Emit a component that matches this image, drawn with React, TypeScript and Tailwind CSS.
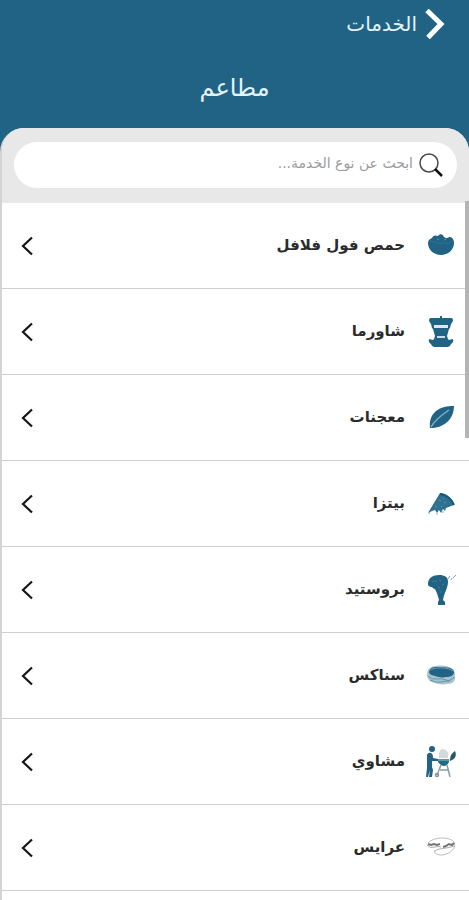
import type { ReactNode } from "react";

type Service = { name: string; icon: ReactNode };

const services: Service[] = [
  {
    name: "حمص فول فلافل",
    icon: (
      <g fill="#206384">
        <path d="M3 13c0-3 2-4 4-5 1-3 4-3 6-2 2-3 5-2 6 1 2 1 3 2 5 0 3 0 5 2 5 6 0 7-6 12-13 12S3 20 3 13z" />
        <path d="M5 11c3 2 6 0 8 2 3 2 5-1 8 0s4-1 6-2" fill="none" stroke="#33718f" strokeWidth="1" />
        <path d="M12 9l2 1M19 10l2-1" stroke="#5d92aa" strokeWidth="1" />
      </g>
    ),
  },
  {
    name: "شاورما",
    icon: (
      <g fill="#206384">
        <path d="M15 0h2v3h-2z" />
        <path d="M6 2h20q2 0 2 2t-2 4l-1 4-1 1-2 7 1 3 1 1 4-1q1 3-2 5-1 3-4 3H10q-3 0-4-3-3-2-2-5l4 1 1-1 1-3-2-7-1-1-1-4Q4 6 4 4t2-2z" />
        <path d="M9 9h14v3H9z" fill="#dceaf0" />
        <path d="M12 20h8v2h-8z" fill="#c5dbe5" />
      </g>
    ),
  },
  {
    name: "معجنات",
    icon: (
      <g>
        <path d="M5 26C4 20 6 13 11 9c5-4 11-5 18-5 0 7-3 13-8 17-4 3-9 5-16 5z" fill="#206384" />
        <path d="M6 25C10 18 15 14 24 8" fill="none" stroke="#86afc2" strokeWidth="1.5" />
      </g>
    ),
  },
  {
    name: "بيتزا",
    icon: (
      <g>
        <path d="M15 5c7 0 13 6 14 12l-8 3-1 3-2-2-2 4-2-3-2 3-2-3-3 1-4 2c4-7 8-13 12-20z" fill="#2e7190" />
        <path d="M15 6c7 1 12 6 14 11" fill="none" stroke="#1b5877" strokeWidth="2" />
        <path d="M14 12l2 1M19 15l2-1M10 18l2 1M16 19l1-1M18 10l1 1" stroke="#6398b0" strokeWidth="1" />
        <path d="M4 24l1 2M12 25v2M18 23v2" stroke="#8bb0c2" strokeWidth="1" />
      </g>
    ),
  },
  {
    name: "بروستيد",
    icon: (
      <g>
        <path d="M3 10C3 4 8 1 14 1c6 0 9 2 9 7 0 6-4 11-5 18l2 2v3h-7v-3l1-2c-1-4-2-7-4-11-2 0-2-2-4-2-2-1-3-1-3-3z" fill="#206384" />
        <path d="M7 8q3-3 5 0M14 6l2 1M13 13l2 1M17 11l2-1M15 18h2" fill="none" stroke="#3f7f99" strokeWidth="1" />
        <path d="M23 5l2-3M26 6l1-2M28 4l3-3" stroke="#8ba5b0" strokeWidth="1" />
      </g>
    ),
  },
  {
    name: "سناكس",
    icon: (
      <g>
        <path d="M2 15c0-6 4-9 9-9 6-1 12 0 15 2 3 1 4 4 4 7 1 6-2 9-8 9-5 1-9 0-12-1-5-1-8-4-8-8z" fill="#a6c3cf" />
        <path d="M4 12c1-4 4-5 8-5 5 0 9 0 13 1 3 1 4 3 4 5-1 3-4 4-8 4-4 1-8 0-11-1-4-1-6-2-6-4z" fill="#206384" />
        <path d="M6 10c4-3 17-3 22 1" fill="none" stroke="#6e9db2" strokeWidth="1" />
        <path d="M3 16q4 4 9 3t9 1 8-3M5 20q6 3 11 2t9-1" fill="none" stroke="#6795aa" strokeWidth="1" />
      </g>
    ),
  },
  {
    name: "مشاوي",
    icon: (
      <g>
        <circle cx="7" cy="3" r="3" fill="#206384" />
        <path d="M2 9q1-3 4-2c2 1 2 3 2 5l5 1v2H7v6l1 3-1 7H4l1-7-2 7H1l1-9z" fill="#206384" />
        <path d="M14 12V7q1-4 4-4t5 4v5z" fill="#d3dadd" />
        <path d="M13 13h11v3q-2 4-5 4t-6-4z" fill="#1f6c85" />
        <path d="M13 14h12" stroke="#a6bdc5" strokeWidth="1" />
        <path d="M25 14q0-6 5-9 3 7-5 10z" fill="#245a69" />
        <path d="M16 19l-4 10M22 19l3 12M15 24h8" fill="none" stroke="#8b9fa7" strokeWidth="1.5" />
        <circle cx="12" cy="29" r="1.5" fill="none" stroke="#8b9196" strokeWidth="1.5" />
      </g>
    ),
  },
  {
    name: "عرايس",
    icon: (
      <g fill="none">
        <path d="M3 11C8 5 24 4 29 10c3 5-3 12-12 13-5 0-9-2-7-5" stroke="#bdbdbd" strokeWidth="1" />
        <path d="M2 13q3 4 8 2 3-1 6 0M10 19c3-3 11-2 19-5" stroke="#ababab" strokeWidth="1" />
        <path d="M3 12l3 1 3-1 3 1 3-1M18 15l3-1 3-2 3 1 2-2" stroke="#757575" strokeWidth="2" />
      </g>
    ),
  },
];

function ServiceRow({ name, icon }: Service) {
  return (
    <li className="border-b border-[#cfcfcf]">
      <a href="#" className="flex h-[85px] items-center gap-5 pr-3 pl-[18px]">
        <svg viewBox="0 0 32 32" className="size-8 shrink-0" aria-hidden="true">
          {icon}
        </svg>
        <span className="flex-1 text-[15px] font-bold text-[#2b2b2b]">{name}</span>
        <svg viewBox="0 0 14 20" className="h-5 w-3.5 shrink-0" aria-hidden="true">
          <path d="M12 1.500L3 10l9 8.500" fill="none" stroke="#161616" strokeWidth="2.200" />
        </svg>
      </a>
    </li>
  );
}

export default function App() {
  return (
    <div
      dir="rtl"
      className="flex min-h-screen flex-col bg-[#206384] font-['DejaVu_Sans',sans-serif]"
    >
      <header className="px-6 pt-2">
        <button type="button" className="flex h-8 items-center gap-2 text-xl text-[#e4f3fa]">
          <svg viewBox="0 0 20 32" className="h-8 w-5" aria-hidden="true">
            <path d="M2 2.500L16 16 3 29.500" fill="none" stroke="#fff" strokeWidth="5" />
          </svg>
          الخدمات
        </button>
        <h1 className="mt-8 mb-6 text-center text-2xl text-[#e4f3fa]">مطاعم</h1>
      </header>

      <main className="relative flex flex-1 flex-col overflow-hidden rounded-t-[24px] border-l-2 border-[#d4d4d4] bg-white">
        <div className="bg-[#e8e8e8] px-3 pt-3.5 pb-[15px]">
          <label className="flex h-[46px] items-center gap-1.5 rounded-full bg-white pr-3.5 pl-4">
            <svg viewBox="0 0 24 24" className="size-6 shrink-0" aria-hidden="true">
              <circle cx="10" cy="10" r="9" fill="none" stroke="#4a4a4a" strokeWidth="1.500" />
              <path d="M16 16l7 7" stroke="#111" strokeWidth="2.500" />
            </svg>
            <input
              type="text"
              aria-label="بحث"
              placeholder="ابحث عن نوع الخدمة..."
              className="min-w-0 flex-1 bg-transparent pb-1 text-sm outline-none placeholder:text-[#9c9c9c]"
            />
          </label>
        </div>
        <ul>
          {services.map((service) => (
            <ServiceRow key={service.name} {...service} />
          ))}
        </ul>
        <div className="absolute top-[73px] right-0 h-[237px] w-1 bg-[#b4b4b4]" />
      </main>
    </div>
  );
}
